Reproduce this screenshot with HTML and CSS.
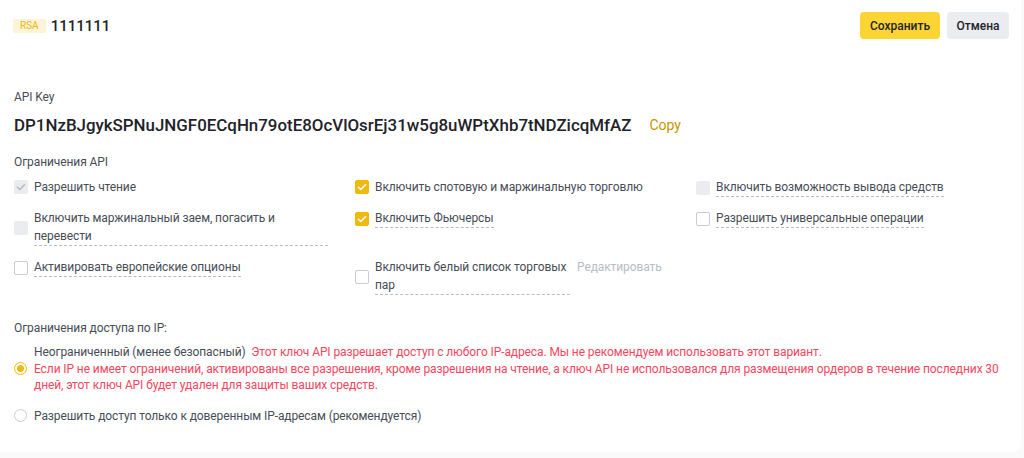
FILE: index.html
```html
<!DOCTYPE html>
<html lang="ru">
<head>
<meta charset="utf-8">
<title>API</title>
<link rel="stylesheet" href="styles.css">
</head>
<body>
<div class="card">
  <div class="header">
    <div class="title-wrap">
      <span class="badge">RSA</span>
      <span class="title">1111111</span>
    </div>
    <div class="actions">
      <button class="btn btn-primary">Сохранить</button>
      <button class="btn btn-secondary">Отмена</button>
    </div>
  </div>

  <div class="label key-label">API Key</div>
  <div class="key-row">
    <span class="key">DP1NzBJgykSPNuJNGF0ECqHn79otE8OcVlOsrEj31w5g8uWPtXhb7tNDZicqMfAZ</span>
    <span class="copy">Copy</span>
  </div>

  <div class="label perm-label">Ограничения API</div>
  <div class="perms">
    <div class="opt">
      <span class="cb cb-disabled-checked"><svg viewBox="0 0 14 14"><path d="M3.5 7.2l2.3 2.3 4.7-4.8" fill="none" stroke="#b7bdc6" stroke-width="1.6" stroke-linecap="round" stroke-linejoin="round"/></svg></span>
      <span class="text">Разрешить чтение</span>
    </div>
    <div class="opt">
      <span class="cb cb-checked"><svg viewBox="0 0 14 14"><path d="M3.5 7.2l2.3 2.3 4.7-4.8" fill="none" stroke="#fff" stroke-width="1.6" stroke-linecap="round" stroke-linejoin="round"/></svg></span>
      <span class="text">Включить спотовую и маржинальную торговлю</span>
    </div>
    <div class="opt">
      <span class="cb cb-disabled"></span>
      <span class="text dotted">Включить возможность вывода средств</span>
    </div>

    <div class="opt">
      <span class="cb cb-disabled"></span>
      <span class="text dotted wide">Включить маржинальный заем, погасить и перевести</span>
    </div>
    <div class="opt">
      <span class="cb cb-checked"><svg viewBox="0 0 14 14"><path d="M3.5 7.2l2.3 2.3 4.7-4.8" fill="none" stroke="#fff" stroke-width="1.6" stroke-linecap="round" stroke-linejoin="round"/></svg></span>
      <span class="text dotted">Включить Фьючерсы</span>
    </div>
    <div class="opt">
      <span class="cb"></span>
      <span class="text dotted">Разрешить универсальные операции</span>
    </div>

    <div class="opt">
      <span class="cb"></span>
      <span class="text dotted">Активировать европейские опционы</span>
    </div>
    <div class="opt">
      <span class="cb"></span>
      <span class="text dotted whitelist">Включить белый список торговых пар</span>
      <span class="edit">Редактировать</span>
    </div>
    <div></div>
  </div>

  <div class="label ip-label">Ограничения доступа по IP:</div>
  <div class="radio-row first">
    <span class="radio radio-checked"></span>
    <div class="radio-text">Неограниченный (менее безопасный)&nbsp; <span class="warn">Этот ключ API разрешает доступ с любого IP-адреса. Мы не рекомендуем использовать этот вариант.</span><br><span class="warn">Если IP не имеет ограничений, активированы все разрешения, кроме разрешения на чтение, а ключ API не использовался для размещения ордеров в течение последних 30 дней, этот ключ API будет удален для защиты ваших средств.</span></div>
  </div>
  <div class="radio-row second">
    <span class="radio"></span>
    <div class="radio-text">Разрешить доступ только к доверенным IP-адресам (рекомендуется)</div>
  </div>
</div>
</body>
</html>
```

FILE: styles.css
```css
* { box-sizing: border-box; }
html, body { margin: 0; padding: 0; }
body {
  background: #fafafa;
  width: 1024px;
  height: 458px;
  overflow: hidden;
  font-family: Roboto, "Noto Sans", "Liberation Sans", sans-serif;
  color: #474d57;
}
.card {
  margin: -10px 0 0 -6px;
  width: 1027px;
  height: 462px;
  background: #fff;
  border-radius: 8px;
  padding: 22px 12px 0 20px;
}
.header {
  display: flex;
  justify-content: space-between;
  align-items: center;
  height: 27px;
}
.title-wrap { display: flex; align-items: center; }
.badge {
  background: #fdf3d6;
  color: #f0b90b;
  font-size: 10px;
  line-height: 14px;
  height: 14px;
  padding: 0 7px;
  border-radius: 2px;
  margin-right: 5px;
  margin-left: -1px;
}
.title {
  font-size: 15px;
  font-weight: 500;
  color: #1e2329;
}
.actions { display: flex; gap: 7px; }
.btn {
  border: none;
  height: 27px;
  border-radius: 4px;
  font-family: inherit;
  font-size: 12px;
  font-weight: 500;
  color: #1e2329;
  padding: 0;
}
.btn-primary { background: #fcd535; width: 80px; }
.btn-secondary { background: #eaecef; width: 62px; }

.label {
  font-size: 12px;
  letter-spacing: -0.1px;
  line-height: 18px;
  color: #474d57;
}
.key-label { margin-top: 49px; }
.key-row {
  margin-top: 7px;
  display: flex;
  align-items: center;
  height: 24px;
}
.key {
  font-size: 16.9px;
  font-weight: 500;
  color: #1e2329;
}
.copy {
  margin-left: 18px;
  color: #c99400;
  font-size: 14px;
  font-weight: 400;
}
.perm-label { margin-top: 16px; }
.perms {
  margin-top: 7px;
  display: grid;
  grid-template-columns: repeat(3, 314px);
  column-gap: 27px;
  row-gap: 12px;
  align-items: start;
}
.opt {
  display: flex;
  align-items: center;
  gap: 6px;
  font-size: 12px;
  letter-spacing: -0.1px;
  line-height: 18px;
}
.text { color: #474d57; }
.dotted { border-bottom: 1px dashed #b7bdc6; }
.whitelist { width: 195px; }
.edit {
  align-self: flex-start;
  color: #b7bdc6;
  margin-left: 1px;
}
.cb {
  flex: none;
  width: 14px;
  height: 14px;
  border-radius: 2px;
  border: 1px solid #c9cdd3;
  background: #fff;
  display: block;
}
.cb svg { display: block; width: 14px; height: 14px; margin: -1px; }
.cb-checked { background: #f0b90b; border-color: #f0b90b; }
.cb-disabled { background: #eaecef; border-color: #eaecef; }
.cb-disabled-checked { background: #eaecef; border-color: #eaecef; }

.ip-label { margin-top: 24px; }
.radio-row {
  display: flex;
  align-items: center;
  gap: 7px;
  font-size: 12px;
  letter-spacing: -0.1px;
  line-height: 16.5px;
}
.radio-row.first { margin-top: 7px; }
.radio-row.second { margin-top: 14px; }
.radio {
  flex: none;
  width: 13px;
  height: 13px;
  border-radius: 50%;
  border: 1px solid #c9cdd3;
  background: #fff;
  position: relative;
}
.radio-checked { border-color: #f0b90b; }
.radio-checked::after {
  content: "";
  position: absolute;
  left: 2px;
  top: 2px;
  width: 7px;
  height: 7px;
  border-radius: 50%;
  background: #f0b90b;
}
.radio-text { color: #474d57; }
.warn { color: #f6465d; }
```
